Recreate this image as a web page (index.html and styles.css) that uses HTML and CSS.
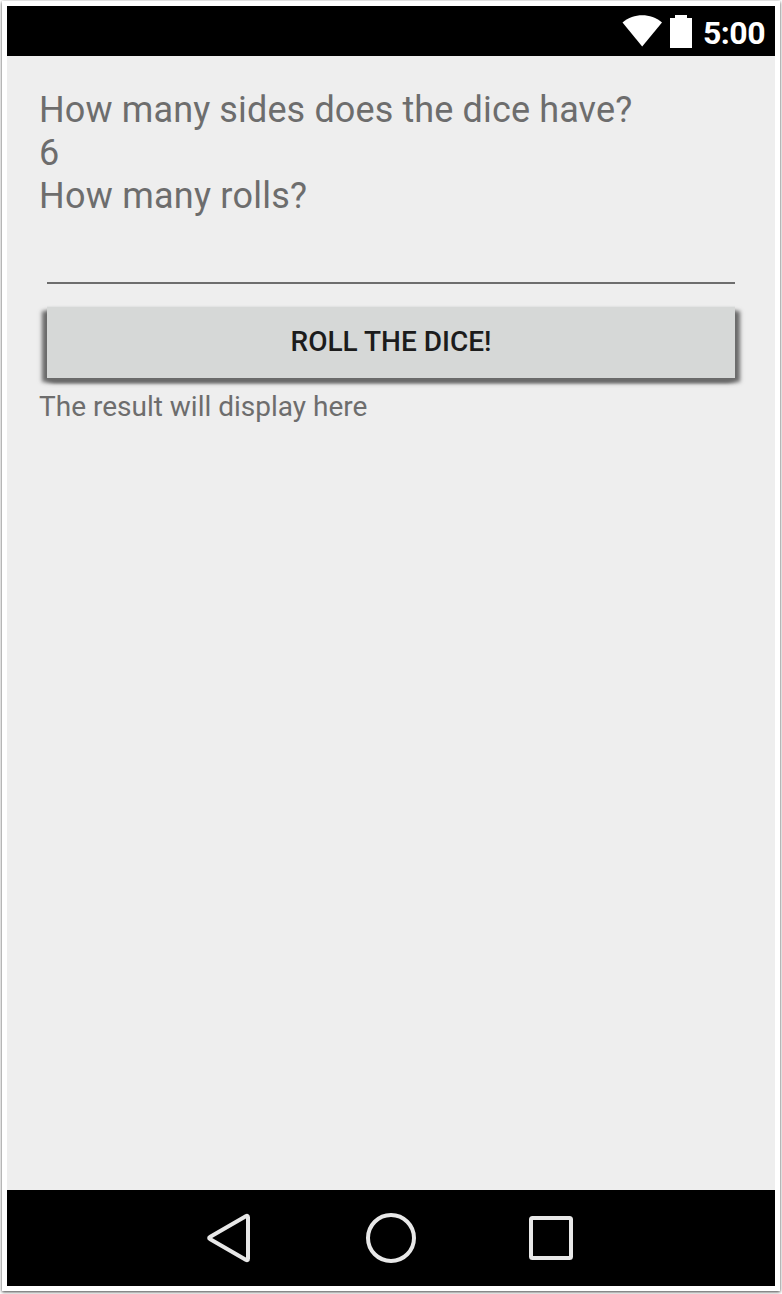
FILE: index.html
```html
<!DOCTYPE html>
<html lang="en">
<head>
<meta charset="utf-8">
<title>Dice Roller</title>
<link rel="stylesheet" href="styles.css">
</head>
<body>
<div class="frame">
  <div class="phone">
    <header class="status">
      <svg class="wifi" width="40" height="32" viewBox="0 0 40 32"><path d="M0.5 7.5C12 -2.2 28.500 -2.200 40 7.500L20.200 31.500Z" fill="#fff"/></svg>
      <svg class="battery" width="22" height="33" viewBox="0 0 22 33"><path d="M5 0H17V3H22V33H0V3H5Z" fill="#fff"/></svg>
      <span class="clock">5:00</span>
    </header>
    <main class="content">
      <label class="question" for="sides">How many sides does the dice have?</label>
      <div class="question" id="sides">6</div>
      <label class="question short" for="rolls">How many rolls?</label>
      <input class="field" id="rolls" type="text">
      <button class="roll" type="button">ROLL THE DICE!</button>
      <p class="result">The result will display here</p>
    </main>
    <nav class="nav">
      <svg width="50" height="54" viewBox="0 0 50 54"><path d="M39.800 5.300Q42 4 42 6.500V47.500Q42 50 39.800 48.700L4.300 28.300Q2 27 4.300 25.700Z"/></svg>
      <svg width="54" height="54" viewBox="0 0 54 54"><circle cx="27" cy="27" r="23"/></svg>
      <svg width="50" height="54" viewBox="0 0 50 54"><rect x="5" y="7" width="40" height="40" rx="1.500"/></svg>
    </nav>
  </div>
</div>
</body>
</html>
```
FILE: styles.css
```css
* { box-sizing: border-box; }
body {
  margin: 0;
  padding: 1px 2px 3px;
  height: 1294px;
  background: #fff;
  font-family: Roboto, "Liberation Sans", sans-serif;
  overflow: hidden;
}
.frame {
  height: 1290px;
  padding: 5px;
  background: #fff;
  box-shadow: 0 1px 3px rgba(0, 0, 0, 0.75);
}
.phone {
  display: flex;
  flex-direction: column;
  height: 1280px;
  background: #eee;
}
.status {
  display: flex;
  justify-content: flex-end;
  align-items: flex-start;
  flex: none;
  height: 50px;
  padding: 9px 10px 0 0;
  background: #000;
  color: #fff;
}
.wifi { margin-right: 8px; }
.battery { margin-right: 11px; }
.clock {
  font-size: 32px;
  font-weight: 700;
  line-height: 36px;
  letter-spacing: -0.5px;
}
.content {
  display: flex;
  flex-direction: column;
  flex: 1;
  padding: 33px 32px 32px;
  color: #6d6d6d;
}
.question {
  font-size: 36px;
  line-height: 43px;
  letter-spacing: 0.13px;
}
.short { letter-spacing: 0.24px; }
.field {
  height: 66px;
  margin: 0 8px 23px;
  border: 0;
  border-bottom: 2px solid #6d6d6d;
  background: transparent;
  font: inherit;
  outline: none;
}
.roll {
  height: 71px;
  margin: 0 8px;
  padding: 0 0 2px;
  border: 0;
  background: #d6d8d7;
  box-shadow: 0 -1px 0 #e3e4e4, 5px 4px 4px #6b6b6b, -5px 4px 4px #6b6b6b, 0 4px 4px #6b6b6b;
  color: #1c1c1c;
  font: 500 28px/33px Roboto, "Liberation Sans", sans-serif;
}
.result {
  margin: 12px 0 0;
  font-size: 28px;
  line-height: 33px;
}
.nav {
  display: flex;
  justify-content: center;
  align-items: center;
  gap: 108px;
  flex: none;
  height: 96px;
  background: #000;
}
.nav svg {
  fill: none;
  stroke: #e8e8e8;
  stroke-width: 4;
  stroke-linejoin: round;
}
```
